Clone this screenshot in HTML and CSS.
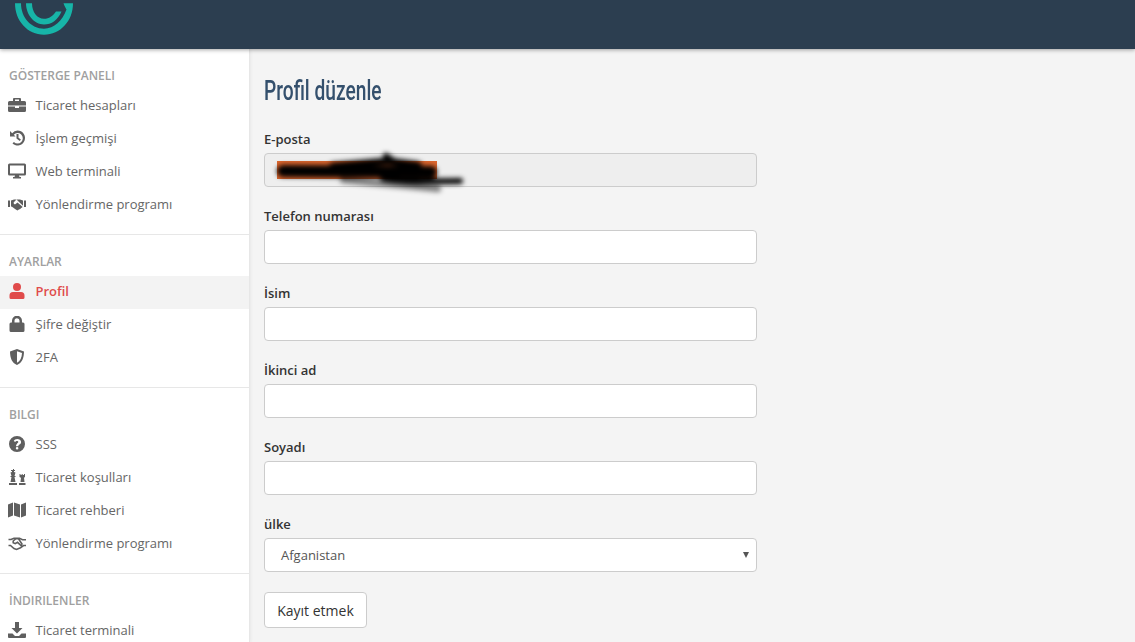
FILE: index.html
```html
<!DOCTYPE html>
<html lang="en">
<head>
  <meta charset="UTF-8" />
  <title>Profil düzenle</title>
  <link rel="stylesheet" href="styles.css">
</head>
<body>
  <header class="topbar">
    <svg class="logo" width="58" height="36" viewBox="0 0 58 36">
      <path d="M0 3.300C0 21 12.500 34.700 29 34.700 45.500 34.700 58 21 58 3.300H48.500C49.500 6 50.500 8 51.500 9.500 47.500 20.500 39 28.700 29 28.700 16 28.700 6 17.500 6 3.300z" fill="#17b5a8"/>
      <path d="M11 3.300C11 14.500 19 24.500 29 24.500 36.500 24.500 43 20 46.500 11.500H41C38 16 34 18.800 29 18.800 22 18.800 17 12 17 3.300z" fill="#17b5a8"/>
    </svg>
  </header>

  <div class="layout">
    <aside class="sidebar">
      <section class="nav-group">
        <h4 class="nav-title">GÖSTERGE PANELI</h4>
        <a class="nav-item">
          <svg class="icon" viewBox="0 0 18 16"><path d="M6 1h6a1 1 0 0 1 1 1v2h3.500A1.500 1.500 0 0 1 18 5.500V8.500H0V5.500A1.500 1.500 0 0 1 1.500 4H5V2a1 1 0 0 1 1-1zm1 1.500V4h4V2.500zM0 9.500h7V11h4V9.500h7v4A1.500 1.500 0 0 1 16.500 15h-15A1.500 1.500 0 0 1 0 13.500z"/></svg>
          <span>Ticaret hesapları</span>
        </a>
        <a class="nav-item">
          <svg class="icon" viewBox="0 0 18 16"><path d="M9.500 0.500a7.500 7.500 0 1 1-5 13.100l1.400-1.700A5.200 5.200 0 1 0 5.800 4.700L7.500 6.500H2V1l2.200 2.200A7.500 7.500 0 0 1 9.500 0.500zM8.500 4h2v3.800l2.400 1.700-1.100 1.500-3.300-2.400z"/></svg>
          <span>İşlem geçmişi</span>
        </a>
        <a class="nav-item">
          <svg class="icon" viewBox="0 0 18 16"><path d="M1.500 0.500h15A1.500 1.500 0 0 1 18 2v9a1.500 1.500 0 0 1-1.500 1.500H11l.5 1.500H13v1.500H5V14h1.500l.5-1.500H1.500A1.500 1.500 0 0 1 0 11V2A1.500 1.500 0 0 1 1.500 0.500zm.5 1.900v8.200h14V2.400z"/></svg>
          <span>Web terminali</span>
        </a>
        <a class="nav-item">
          <svg class="icon" viewBox="0 0 18 16"><path d="M0 4.500h2V11H0zM16 4.500h2V11h-2zM3 4.500L6 3.500h2.500L5.800 6.300a1.300 1.300 0 0 0 1.900 1.700L9.500 6.500l5 4.300-.3.700-1 .6-1 1-1.300.4-1.500 1-2-1.200L4 10.800 3 10.500zM10.500 3.500H12l3 1v5.200L10.500 5.500 8.500 3.500z"/></svg>
          <span>Yönlendirme programı</span>
        </a>
      </section>

      <section class="nav-group">
        <h4 class="nav-title">AYARLAR</h4>
        <a class="nav-item active">
          <svg class="icon" viewBox="0 0 18 16"><circle cx="9" cy="4" r="4"/><path d="M3 16a1.500 1.500 0 0 1-1.500-1.500V12.500A3.500 3.500 0 0 1 5 9h8a3.500 3.500 0 0 1 3.500 3.500v2A1.500 1.500 0 0 1 15 16z"/></svg>
          <span>Profil</span>
        </a>
        <a class="nav-item">
          <svg class="icon" viewBox="0 0 18 16"><path d="M4 6.500V4.700a5 5 0 0 1 10 0v1.800h1a1.500 1.500 0 0 1 1.500 1.500v6.500A1.500 1.500 0 0 1 15 16H3a1.500 1.500 0 0 1-1.500-1.500V8A1.500 1.500 0 0 1 3 6.500zm2.500 0h5V4.700a2.500 2.500 0 0 0-5 0z"/></svg>
          <span>Şifre değiştir</span>
        </a>
        <a class="nav-item">
          <svg class="icon" viewBox="0 0 18 16"><path d="M9 0l7 2.500C16 9 14 14 9 16 4 14 2 9 2 2.500zm0 2.200v11.500c3.300-1.700 4.800-5.300 5-9.800z"/></svg>
          <span>2FA</span>
        </a>
      </section>

      <section class="nav-group">
        <h4 class="nav-title">BILGI</h4>
        <a class="nav-item">
          <svg class="icon" viewBox="0 0 18 16"><path d="M9 0a8 8 0 1 1 0 16A8 8 0 0 1 9 0zM9.200 3C7.500 3 6.400 3.800 5.700 5l1.500 1.100c.5-.6.900-1 1.800-1 .7 0 1.300.4 1.300 1 0 .5-.4.800-1.100 1.200C9.400 7.800 8 8.400 8 10v.3h2.300c0-1 .5-1.300 1.300-1.800.9-.5 1.500-1.200 1.500-2.400C13.100 4.200 11.100 3 9.200 3zM9.100 11a1.300 1.300 0 1 0 0 2.600 1.300 1.300 0 0 0 0-2.600z"/></svg>
          <span>SSS</span>
        </a>
        <a class="nav-item">
          <svg class="icon" viewBox="0 0 18 16"><path d="M5 0h1v1h1v1H6v1l1.500.5L6.500 7h1v1H6.500L7.500 13h-5L3.500 8H2.500V7h1L2.500 3.500 4 3V2H3V1h2zM1 14h8v2H1zM11.500 5h1v1h1.200V5h1v1H16V5h1v3l-1 .8.500 4.200h-4L13 8.800 11.500 8zM11 14h6.500v2H11z"/></svg>
          <span>Ticaret koşulları</span>
        </a>
        <a class="nav-item">
          <svg class="icon" viewBox="0 0 18 16"><path d="M0 2.500L5 .5v13L0 15.500zM6 .5l6 2v13l-6-2zM13 2.500l5-2v13l-5 2z"/></svg>
          <span>Ticaret rehberi</span>
        </a>
        <a class="nav-item">
          <svg class="icon outline" viewBox="0 0 18 16"><path d="M.5 4.500h2.500l3-1.200h2.500l3 0 3 1.400h3.500M.5 10.500h2L6 13.500l2.500 1 4-1.800 3-2.200h2.500M5.200 6l3-2.500 2.300.2 3.500 5.300-1 1.600-3.500-3.300-2.300 1.400-2-1z"/></svg>
          <span>Yönlendirme programı</span>
        </a>
      </section>

      <section class="nav-group">
        <h4 class="nav-title">İNDIRILENLER</h4>
        <a class="nav-item">
          <svg class="icon" viewBox="0 0 18 16"><path d="M7 0h4v6h3.500L9 11.500 3.500 6H7zM0 11.500h4.500L7 14h4l2.500-2.500H18V15a1 1 0 0 1-1 1H1a1 1 0 0 1-1-1z"/></svg>
          <span>Ticaret terminali</span>
        </a>
      </section>
    </aside>

    <main class="content">
      <h1 class="page-title">Profil düzenle</h1>
      <form class="profile-form">
        <div class="field">
          <label>E-posta</label>
          <div class="readonly-wrap">
            <input class="input" type="text" disabled />
            <svg class="scribble" width="200" height="40" viewBox="0 0 200 40">
              <defs>
                <filter id="smear" x="-10%" y="-60%" width="120%" height="220%"><feGaussianBlur stdDeviation="2.400"/></filter>
              </defs>
              <rect x="4" y="9" width="160" height="18" fill="#dc662e"/>
              <g filter="url(#smear)" fill="none" stroke="#000" stroke-linecap="round">
                <path d="M10 19 L158 20" stroke-width="12"/>
                <path d="M60 14 L115 9 L145 13" stroke-width="7"/>
                <path d="M113 4 L120 9" stroke-width="6"/>
                <path d="M110 26 C130 31 170 29 187 29" stroke-width="6"/>
                <path d="M70 28 L165 37" stroke-width="6" opacity=".5"/>
              </g>
            </svg>
          </div>
        </div>
        <div class="field">
          <label>Telefon numarası</label>
          <input class="input" type="text" />
        </div>
        <div class="field">
          <label>İsim</label>
          <input class="input" type="text" />
        </div>
        <div class="field">
          <label>İkinci ad</label>
          <input class="input" type="text" />
        </div>
        <div class="field">
          <label>Soyadı</label>
          <input class="input" type="text" />
        </div>
        <div class="field">
          <label>ülke</label>
          <div class="select-box">
            <span>Afganistan</span>
            <i class="caret"></i>
          </div>
        </div>
        <button class="btn" type="button">Kayıt etmek</button>
      </form>
    </main>
  </div>
</body>
</html>
```

FILE: styles.css
```css
* {
  box-sizing: border-box;
}

body {
  margin: 0;
  height: 642px;
  overflow: hidden;
  font-family: "Open Sans", "Liberation Sans", sans-serif;
  font-size: 13px;
  color: #333;
  background-color: #f4f4f4;
}

.topbar {
  height: 49px;
  background-color: #2c3e50;
  box-shadow: 0 1px 4px rgba(0, 0, 0, 0.35);
  position: relative;
  z-index: 2;
}

.logo {
  display: block;
  margin-left: 15px;
}

.layout {
  display: flex;
}

.sidebar {
  width: 250px;
  flex-shrink: 0;
  background-color: #fff;
  border-right: 1px solid #e7e7e7;
  box-shadow: 1px 0 3px rgba(0, 0, 0, 0.05);
  height: 593px;
  overflow: hidden;
}

.nav-group {
  padding-bottom: 12px;
  border-bottom: 1px solid #e7e7e7;
}

.nav-title {
  margin: 0;
  padding: 19px 9px 0;
  height: 41px;
  font-size: 12px;
  line-height: 16px;
  font-weight: 600;
  color: #a0a0a0;
}

.nav-item {
  display: flex;
  align-items: center;
  height: 33px;
  padding: 0 0 3px 8px;
  color: #666;
  margin-right: -1px;
}

.nav-item span {
  margin-left: 9.5px;
}

.icon {
  width: 18px;
  height: 16px;
  fill: #5f5f5f;
  flex-shrink: 0;
}

.icon.outline {
  fill: none;
  stroke: #5f5f5f;
  stroke-width: 1.6;
}

.nav-item.active {
  background-color: #f3f3f3;
  border-right: 1px solid #e44c4c;
  color: #e04b4b;
  font-weight: 600;
}

.nav-item.active .icon {
  fill: #e04b4b;
}

.content {
  flex: 1;
  padding: 0 14px;
}

.page-title {
  margin: 0;
  padding-top: 25px;
  height: 82px;
  font-family: Roboto, "Liberation Sans", sans-serif;
  font-size: 27px;
  line-height: 34px;
  font-weight: 500;
  color: #34506d;
  transform: scaleX(0.71);
  transform-origin: left center;
}

.profile-form {
  width: 493px;
}

.field {
  height: 77px;
}

.field label {
  display: block;
  height: 22px;
  font-weight: 600;
  line-height: 16px;
  color: #333;
}

.readonly-wrap {
  position: relative;
}

.input {
  display: block;
  width: 100%;
  height: 34px;
  border: 1px solid #ccc;
  border-radius: 4px;
  background-color: #fff;
  padding: 0 12px;
}

.input:disabled {
  background-color: #eee;
}

.scribble {
  position: absolute;
  left: 9px;
  top: -1px;
  overflow: visible;
}

.select-box {
  display: flex;
  align-items: center;
  justify-content: space-between;
  height: 34px;
  padding: 0 7px 0 16px;
  border: 1px solid #ccc;
  border-radius: 4px;
  background-color: #fff;
  color: #555;
}

.caret {
  width: 0;
  height: 0;
  border-left: 3px solid transparent;
  border-right: 3px solid transparent;
  border-top: 6px solid #555;
}

.btn {
  display: block;
  margin-top: -1px;
  width: 103px;
  height: 36px;
  border: 1px solid #ccc;
  border-radius: 4px;
  background-color: #fff;
  font-family: inherit;
  font-size: 14px;
  color: #333;
}
```
